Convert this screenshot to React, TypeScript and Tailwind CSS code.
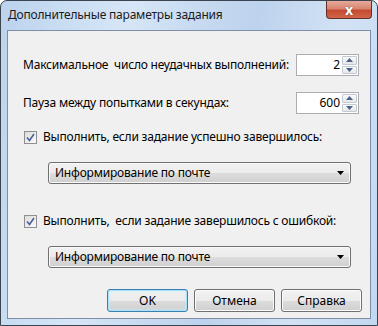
import React from 'react';

const font = { fontFamily: '"Noto Sans", "Open Sans", sans-serif' };

function Spin({ value }: { value: string }) {
  return (
    <div className="flex h-[22px] w-[63px] items-center border border-[#abadb3] bg-white pr-[1px]">
      <span className="flex-1 pr-[2px] text-right text-[12px] text-black">{value}</span>
      <div className="flex h-[18px] w-[15px] flex-col gap-[1px]">
        {['up', 'down'].map(d => (
          <div
            key={d}
            className="flex flex-1 items-center justify-center rounded-[1px] border border-[#c5c9d2] bg-gradient-to-b from-[#fbfbfb] to-[#e4e6ea]"
          >
            <svg width="7" height="4" viewBox="0 0 7 4">
              {d === 'up' ? (
                <path d="M0 4 L3.5 0 L7 4 Z" fill="#4d6185" />
              ) : (
                <path d="M0 0 L3.5 4 L7 0 Z" fill="#4d6185" />
              )}
            </svg>
          </div>
        ))}
      </div>
    </div>
  );
}

function Check({ label }: { label: string }) {
  return (
    <div className="flex items-center gap-[6px]">
      <div className="flex h-[13px] w-[13px] items-center justify-center border border-[#8e8f8f] bg-gradient-to-br from-[#dcdcdc] to-[#fbfbfb]">
        <svg width="9" height="9" viewBox="0 0 9 9">
          <path d="M1 4.5 L3.5 7.5 L8 1" fill="none" stroke="#4a5f97" strokeWidth="1.6" />
        </svg>
      </div>
      <span className="whitespace-pre text-[12px] tracking-[-0.2px] text-black">{label}</span>
    </div>
  );
}

function Combo() {
  return (
    <div className="flex h-[22px] w-[303px] items-center justify-between rounded-[3px] border border-[#707070] bg-[linear-gradient(#f2f2f2_0%,#ebebeb_50%,#dddddd_50%,#cfcfcf_100%)] pl-[6px] pr-[6px] shadow-[inset_0_0_0_1px_#fafafa]">
      <span className="text-[12px] tracking-[-0.2px] text-black">Информирование по почте</span>
      <svg width="7" height="4" viewBox="0 0 7 4">
        <path d="M0 0 L7 0 L3.5 4 Z" fill="#000" />
      </svg>
    </div>
  );
}

function Btn({ label, def }: { label: string; def?: boolean }) {
  return (
    <div
      className={
        'flex h-[23px] w-[81px] items-center justify-center rounded-[3px] border bg-[linear-gradient(#f2f2f2_0%,#ebebeb_50%,#dddddd_50%,#cfcfcf_100%)] text-[12px] text-black ' +
        (def
          ? 'border-[#3c7fb1] shadow-[inset_0_0_0_1px_#a9e0f8,inset_0_0_3px_1px_#c6ebfb]'
          : 'border-[#707070] shadow-[inset_0_0_0_1px_#fcfcfc]')
      }
    >
      {label}
    </div>
  );
}

export default function App() {
  return (
    <div style={font} className="h-[326px] w-[378px] bg-white">
      <div className="flex h-[326px] w-[378px] flex-col rounded-t-[7px] border border-[#3a4550] bg-[linear-gradient(100deg,#bcd3ee_0%,#d6e6f7_30%,#c8dbf1_45%,#bdd2ed_60%,#d3e3f5_80%,#c2d7f0_100%)]">
        {/* title bar */}
        <div className="flex h-[29px] items-start justify-between pl-[7px] pr-[5px]">
          <span className="mt-[5px] text-[12px] tracking-[-0.2px] text-[#1b1b1b]">Дополнительные параметры задания</span>
          <div className="flex h-[18px] w-[46px] items-center justify-center rounded-b-[4px] border border-t-0 border-[#60302a] bg-[linear-gradient(#e6a99b_0%,#d88670_45%,#c54a31_55%,#d0664b_100%)]">
            <span className="text-[14px] font-bold leading-none text-white [text-shadow:0_0_1px_#333]">x</span>
          </div>
        </div>
        {/* client area */}
        <div className="mx-[6px] mb-[6px] flex-1 border border-[#7d8ea6] bg-[#f0f0f0]">
          <div className="flex flex-col pl-[15px] pr-[11px] pt-[23px]">
            <div className="flex items-center justify-between">
              <span className="whitespace-pre text-[12px] tracking-[-0.2px] text-black">Максимальное  число неудачных выполнений:</span>
              <Spin value="2" />
            </div>
            <div className="mt-[16px] flex items-center justify-between">
              <span className="text-[12px] tracking-[-0.2px] text-black">Пауза между попытками в секундах:</span>
              <Spin value="600" />
            </div>
            <div className="mt-[14px] pl-[1px]">
              <Check label="Выполнить, если задание успешно завершилось:" />
            </div>
            <div className="mt-[16px] pl-[25px]">
              <Combo />
            </div>
            <div className="mt-[28px] pl-[1px]">
              <Check label="Выполнить,  если задание завершилось с ошибкой:" />
            </div>
            <div className="mt-[16px] pl-[25px]">
              <Combo />
            </div>
            <div className="-mr-[3px] mt-[21px] flex justify-end gap-[6px]">
              <Btn label="OK" def />
              <Btn label="Отмена" />
              <Btn label="Справка" />
            </div>
          </div>
        </div>
      </div>
    </div>
  );
}
